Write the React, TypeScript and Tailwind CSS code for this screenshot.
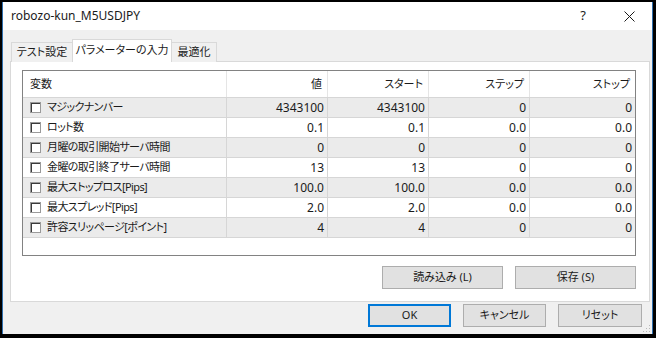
import { useState } from "react";

type Row = { name: string; value: string; start: string; step: string; stop: string };

const rows: Row[] = [
  { name: "マジックナンバー", value: "4343100", start: "4343100", step: "0", stop: "0" },
  { name: "ロット数", value: "0.1", start: "0.1", step: "0.0", stop: "0.0" },
  { name: "月曜の取引開始サーバ時間", value: "0", start: "0", step: "0", stop: "0" },
  { name: "金曜の取引終了サーバ時間", value: "13", start: "13", step: "0", stop: "0" },
  { name: "最大ストップロス[Pips]", value: "100.0", start: "100.0", step: "0.0", stop: "0.0" },
  { name: "最大スプレッド[Pips]", value: "2.0", start: "2.0", step: "0.0", stop: "0.0" },
  { name: "許容スリッページ[ポイント]", value: "4", start: "4", step: "0", stop: "0" },
];

const cols = "grid grid-cols-[204px_101px_101px_101px_1fr]";

const Checkbox = () => (
  <span className="inline-block w-[11px] h-[11px] shrink-0 bg-white border border-[#9a9a9a] shadow-[inset_1px_1px_0_#3a3a3a]" />
);

const DlgButton = ({ label, w, focus }: { label: string; w: string; focus?: boolean }) => (
  <button
    className={`${w} h-[23px] bg-[#e1e1e1] text-[11px] text-[#1a1a1a] whitespace-nowrap flex items-center justify-center ${
      focus ? "border-2 border-[#0078d7]" : "border border-[#adadad]"
    }`}
  >
    {label}
  </button>
);

export default function App() {
  const [tab] = useState(1);
  const tabs = ["テスト設定", "パラメーターの入力", "最適化"];

  return (
    <div className="w-[656px] h-[338px] bg-black pt-[2px] pl-[2px] [font-family:'Noto_Sans','Noto_Sans_CJK_JP',sans-serif] [font-feature-settings:'palt'] text-[#1a1a1a]">
      <div className="relative w-[651px] h-[332px] flex flex-col border-x border-[#2f6fae] bg-[#f0f0f0]">
        {/* title bar */}
        <div className="h-[28px] bg-white flex items-center">
          <span className="pl-[8px] text-[12px] flex-1">robozo-kun_M5USDJPY</span>
          <span className="w-[46px] h-full flex items-center justify-center text-[13px]">?</span>
          <span className="w-[46px] h-full flex items-center justify-center">
            <svg width="11" height="11" viewBox="0 0 11 11">
              <path d="M0.5 0.5 L10.5 10.5 M10.5 0.5 L0.5 10.5" stroke="#1a1a1a" strokeWidth="1" />
            </svg>
          </span>
        </div>

        {/* body */}
        <div className="flex-1 pt-[9px] pl-[7px]">
          <div className="flex items-end h-[23px] pl-[1px] relative z-10 -mb-px">
            {tabs.map((t, i) =>
              i === tab ? (
                <div
                  key={t}
                  className="h-[23px] w-[100px] bg-white border border-b-0 border-[#d9d9d9] flex items-center justify-center text-[11px] whitespace-nowrap pb-[2px]"
                >
                  {t}
                </div>
              ) : (
                <div
                  key={t}
                  className={`h-[20px] bg-[#f0f0f0] border border-b-0 border-[#d9d9d9] flex items-center justify-center text-[11px] whitespace-nowrap ${
                    i === 0 ? "w-[61px] border-r-0" : "w-[45px] border-l-0"
                  }`}
                >
                  {t}
                </div>
              )
            )}
          </div>

          <div className="w-[640px] h-[241px] bg-white border border-[#d9d9d9] pt-[8px] pl-[11px]">
            <div className="w-[614px] h-[186px] border border-[#828282] text-[12px]">
              <div className={`${cols} h-[27px] border-b border-[#d6d6d6] text-[11px]`}>
                <div className="border-r border-[#e5e5e5] pl-[7px] flex items-center">変数</div>
                <div className="border-r border-[#e5e5e5] pr-[5px] flex items-center justify-end">値</div>
                <div className="border-r border-[#e5e5e5] pr-[5px] flex items-center justify-end">スタート</div>
                <div className="border-r border-[#e5e5e5] pr-[5px] flex items-center justify-end">ステップ</div>
                <div className="pr-[5px] flex items-center justify-end">ストップ</div>
              </div>
              {rows.map((r, i) => (
                <div
                  key={r.name}
                  className={`${cols} h-[20px] border-b border-[#d6d6d6] ${i % 2 === 0 ? "bg-[#ebebeb]" : "bg-white"}`}
                >
                  <div className="border-r border-[#d6d6d6] pl-[7px] flex items-center gap-[6px]">
                    <Checkbox />
                    <span className="text-[11px] tracking-[-0.6px] whitespace-nowrap">{r.name}</span>
                  </div>
                  <div className="border-r border-[#d6d6d6] pr-[3px] flex items-center justify-end">{r.value}</div>
                  <div className="border-r border-[#d6d6d6] pr-[3px] flex items-center justify-end">{r.start}</div>
                  <div className="border-r border-[#d6d6d6] pr-[3px] flex items-center justify-end">{r.step}</div>
                  <div className="pr-[3px] flex items-center justify-end">{r.stop}</div>
                </div>
              ))}
            </div>

            <div className="w-[614px] flex justify-end gap-[12px] mt-[10px]">
              <DlgButton label="読み込み (L)" w="w-[121px]" />
              <DlgButton label="保存 (S)" w="w-[121px]" />
            </div>
          </div>

          <div className="flex justify-end gap-[12px] mt-[2px] pr-[10px]">
            <DlgButton label="OK" w="w-[83px]" focus />
            <DlgButton label="キャンセル" w="w-[83px]" />
            <DlgButton label="リセット" w="w-[84px]" />
          </div>
        </div>

        {/* size grip */}
        <svg className="absolute right-[1px] bottom-[1px]" width="9" height="9" viewBox="0 0 9 9">
          <rect x="7" y="1" width="1" height="1" fill="#b8b8b8" />
          <rect x="4" y="4" width="1" height="1" fill="#b8b8b8" />
          <rect x="7" y="4" width="1" height="1" fill="#b8b8b8" />
          <rect x="1" y="7" width="1" height="1" fill="#b8b8b8" />
          <rect x="4" y="7" width="1" height="1" fill="#b8b8b8" />
          <rect x="7" y="7" width="1" height="1" fill="#b8b8b8" />
        </svg>
      </div>
    </div>
  );
}
